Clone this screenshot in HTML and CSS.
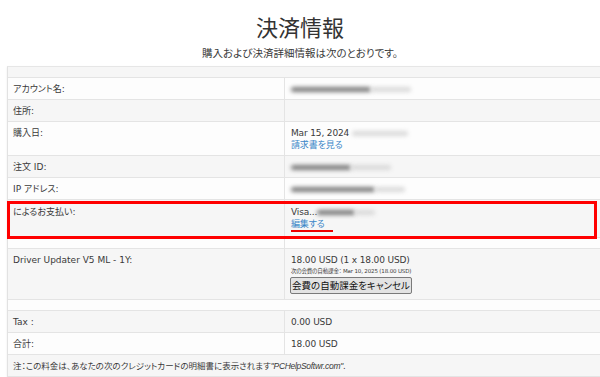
FILE: index.html
```html
<!DOCTYPE html>
<html lang="ja">
<head>
    <meta charset="UTF-8">
    <meta name="viewport" content="width=device-width, initial-scale=1.0">
    <title>決済情報</title>
    <link rel="stylesheet" href="styles.css">
</head>
<body>

<div class="header">
    <h1>決済情報</h1>
    <p class="lead">購入および決済詳細情報は次のとおりです。</p>
</div>

<div class="details">
    <div class="row blank"></div>

    <div class="row">
        <div class="label">アカウント名:</div>
        <div class="value"><span class="blur w80"></span><span class="blur faint w40"></span></div>
    </div>
    <div class="row">
        <div class="label">住所:</div>
        <div class="value"></div>
    </div>
    <div class="row">
        <div class="label">購入日:</div>
        <div class="value">
            Mar 15, 2024 <span class="blur faint w56"></span><br>
            <a href="#">請求書を見る</a>
        </div>
    </div>
    <div class="row">
        <div class="label">注文 ID:</div>
        <div class="value"><span class="blur w60"></span><span class="blur faint w40"></span></div>
    </div>
    <div class="row">
        <div class="label">IP アドレス:</div>
        <div class="value"><span class="blur w84"></span><span class="blur faint w30"></span></div>
    </div>
    <div class="row marked">
        <div class="label">によるお支払い:</div>
        <div class="value">
            Visa...<span class="blur w38"></span><span class="blur faint w20"></span><br>
            <a href="#" class="underlined">編集する</a>
        </div>
    </div>

    <div class="row blank split">
        <div class="label"></div>
        <div class="value"></div>
    </div>

    <div class="row">
        <div class="label">Driver Updater V5 ML - 1Y:</div>
        <div class="value">
            18.00 USD (1 x 18.00 USD)
            <div class="renewal">次の会費の自動課金： Mar 10, 2025 (18.00 USD)</div>
            <button class="cancel-btn">会費の自動課金をキャンセル</button>
        </div>
    </div>

    <div class="row blank"></div>

    <div class="row">
        <div class="label">Tax :</div>
        <div class="value">0.00 USD</div>
    </div>
    <div class="row">
        <div class="label">合計:</div>
        <div class="value">18.00 USD</div>
    </div>
    <div class="row note">
        注：この料金は、あなたの次のクレジットカードの明細書に表示されます<em>"PCHelpSoftwr.com"</em>.
    </div>
</div>

</body>
</html>
```

FILE: styles.css
```css
html, body {
    overflow: hidden;
}
body {
    font-family: "DejaVu Sans", "Noto Sans CJK JP", sans-serif;
    font-size: 9px;
    color: #3a3a3a;
    background-color: #fff;
    margin: 0;
}
.header {
    text-align: center;
    padding-top: 16px;
}
.header h1 {
    font-size: 22px;
    line-height: 26px;
    font-weight: normal;
    margin: 0;
    color: #333;
}
.lead {
    font-size: 10.5px;
    line-height: 14px;
    margin: 4px 0 6px;
    font-feature-settings: "palt";
}
.details {
    margin-left: 7px;
    width: 610px;
    border-left: 1px solid #e2e2e2;
    border-top: 1px solid #e6e6e6;
    box-shadow: 0 1px 2px rgba(0, 0, 0, 0.08);
}
.row {
    display: grid;
    grid-template-columns: 276px 1fr;
    border-bottom: 1px solid #e4e4e4;
    line-height: 12px;
    font-feature-settings: "palt";
}
.row:nth-child(odd) {
    background-color: #f6f6f6;
}
.row:nth-child(even) {
    background-color: #fdfdfd;
}
.label {
    padding: 5px 5px 4px;
}
.value {
    padding: 5px 6px 4px;
    border-left: 1px solid #e4e4e4;
    letter-spacing: -0.15px;
}
.blank {
    height: 10px;
}
.blank .label, .blank .value {
    padding: 0;
}
.value a {
    color: #3a86c8;
    text-decoration: none;
}
.blur {
    display: inline-block;
    height: 5px;
    vertical-align: middle;
    background-color: #7c7c7c;
    border-radius: 3px;
    filter: blur(2px);
}
.blur.faint {
    background-color: #d9d9d9;
}
.w20 { width: 20px; }
.w30 { width: 30px; }
.w38 { width: 38px; }
.w40 { width: 40px; }
.w56 { width: 56px; background-color: #c9c9c9; }
.w60 { width: 60px; }
.w80 { width: 80px; }
.w84 { width: 84px; }
.marked {
    position: relative;
}
.marked .label, .marked .value {
    padding-top: 6px;
    padding-bottom: 5px;
}
.marked::after {
    content: "";
    position: absolute;
    left: -1px;
    top: 1px;
    width: 584px;
    bottom: -2px;
    border: 3px solid #f00;
}
.underlined {
    display: inline-block;
    padding-right: 8px;
    border-bottom: 2px solid #e00;
    line-height: 11px;
}
.renewal {
    font-size: 5.5px;
    line-height: 10px;
}
.cancel-btn {
    font-family: "Noto Sans CJK JP", sans-serif;
    font-size: 9.5px;
    line-height: 13px;
    color: #111;
    background-color: #e3e3e3;
    border: 1px solid #7a7a7a;
    border-radius: 2px;
    padding: 1px 1px;
    margin: 1px 0 1px -1px;
    font-feature-settings: "palt";
}
.note {
    display: block;
    padding: 5px 5px 4px;
    font-size: 8.5px;
    line-height: 12px;
}
.note em {
    font-family: "Liberation Sans", sans-serif;
    letter-spacing: -0.3px;
}
```
